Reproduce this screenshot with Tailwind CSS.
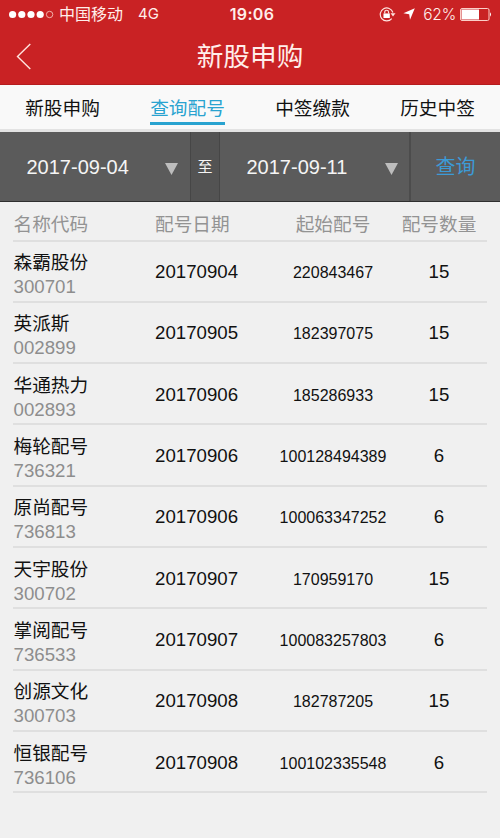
<!DOCTYPE html>
<html lang="zh-CN">
<head>
    <meta charset="UTF-8">
    <meta name="viewport" content="width=device-width, initial-scale=1.0">
    <title>新股申购</title>
    <script src="https://cdn.jsdelivr.net/npm/@tailwindcss/browser@4"></script>
</head>
<body class="bg-[#f0f0f0] min-h-screen overflow-hidden text-[#111] font-['Liberation_Sans','Noto_Sans_CJK_SC',sans-serif]">
    <header class="h-[85px] bg-[#c92224] text-[#ffeeea] border-b border-[#b51c1e]">
        <!-- status bar -->
        <div class="h-7 grid grid-cols-3 items-center pl-[9px] pr-2 font-['Inter','Noto_Sans_CJK_SC',sans-serif] text-[15px]">
            <div class="flex items-center">
                <svg class="w-[45px] h-[9px] shrink-0" viewBox="0 0 45 9" fill="#fff">
                    <circle cx="3.6" cy="4.5" r="3.6"/>
                    <circle cx="12.8" cy="4.5" r="3.6"/>
                    <circle cx="22" cy="4.5" r="3.6"/>
                    <circle cx="31.2" cy="4.5" r="3.6"/>
                    <circle cx="40.6" cy="4.5" r="3.2" fill="none" stroke="#fbcfc8" stroke-width="0.8"/>
                </svg>
                <span class="ml-[5px] text-base leading-7 whitespace-nowrap">中国移动</span>
                <span class="ml-[15px] mt-px text-[15px]">4G</span>
            </div>
            <div class="text-center font-semibold text-base tracking-[0.3px] pl-[3px]">19:06</div>
            <div class="flex items-center justify-end">
                <svg class="w-[17px] h-[15px] shrink-0" viewBox="0 0 16 14" fill="none" stroke="#ffe4df" stroke-width="1.1">
                    <path d="M13.1 5.1A6.1 6.1 0 1 0 12 10.8"/>
                    <path d="M10.9 5.9h4.6l-2.3 3z" fill="#ffe4df" stroke="none"/>
                    <rect x="4.2" y="6" width="6" height="4.3" fill="#fff" stroke="none"/>
                    <path d="M5.4 6V4.8a1.8 1.8 0 0 1 3.6 0V6"/>
                </svg>
                <svg class="w-3 h-3 ml-[7px] shrink-0" viewBox="0 0 12 12" fill="#fff">
                    <path d="M11.8.2 7 11.8 6.2 6.2.4 5.3z"/>
                </svg>
                <span class="ml-[8px] mr-1 mt-px font-light text-[15.5px] tracking-[-0.2px]">62%</span>
                <svg class="w-8 h-[13px] shrink-0" viewBox="0 0 32 13">
                    <rect x="0.5" y="0.5" width="28.5" height="12" rx="1.5" fill="none" stroke="#fbcfc8"/>
                    <rect x="1.5" y="1.5" width="17.5" height="10" fill="#fff"/>
                    <path d="M30 4.3q2 2.2 0 4.4z" fill="#fff"/>
                </svg>
            </div>
        </div>
        <div class="h-[57px] grid grid-cols-[100px_1fr_100px] items-center">
            <svg class="w-4 h-[27px] ml-4" viewBox="0 0 16 27" fill="none" stroke="#ffe4df" stroke-width="1.4">
                <path d="M14.3 1 1.5 13.5 14.3 26"/>
            </svg>
            <h1 class="text-center text-[26.67px] leading-[56px] font-normal">新股申购</h1>
        </div>
    </header>

    <nav class="h-[47px] bg-[#f9f9f9] border-b-[3px] border-[#e3e3e3] grid grid-cols-4 text-[18.67px] leading-[36px] text-center pt-1.5">
        <a>新股申购</a>
        <a class="justify-self-center w-[75px] h-[34px] border-b-3 border-[#29a3d0] text-[#29a3d0] whitespace-nowrap">查询配号</a>
        <a>中签缴款</a>
        <a>历史中签</a>
    </nav>

    <div class="h-[70px] bg-[#5b5b5b] border-b border-[#2f2f2f] flex items-stretch text-[#f5f5f5] text-xl leading-[70px]">
        <div class="w-[190px] flex items-center pl-[26.5px]">
            <span class="w-[138.5px]">2017-09-04</span>
            <svg class="w-[13px] h-3 mt-1" viewBox="0 0 13 12" fill="#bdbdbd"><path d="M0 0h13L6.5 12z"/></svg>
        </div>
        <div class="w-[30px] bg-[#535353] border-x border-[#464646] text-center text-[15px] leading-[70px]">至</div>
        <div class="w-[191px] flex items-center pl-[26.5px] border-r-2 border-[#4c4c4c]">
            <span class="w-[138.5px]">2017-09-11</span>
            <svg class="w-[13px] h-3 mt-1" viewBox="0 0 13 12" fill="#bdbdbd"><path d="M0 0h13L6.5 12z"/></svg>
        </div>
        <button class="flex-1 text-[#3d9ad6] leading-[70px]">查询</button>
    </div>

    <main class="px-[13px] text-[18.67px]">
        <div class="h-[39.5px] border-b-2 border-[#dfdfdf] grid grid-cols-[142px_115px_126px_86px] text-[#939393] leading-[46px]">
            <span class="pl-[0.5px]">名称代码</span>
            <span>配号日期</span>
            <span class="text-center">起始配号</span>
            <span class="text-center">配号数量</span>
        </div>
        <div id="list"></div>
    </main>

    <script>
    const rows = [
        ['森霸股份', '300701', '20170904', '220843467', '15'],
        ['英派斯', '002899', '20170905', '182397075', '15'],
        ['华通热力', '002893', '20170906', '185286933', '15'],
        ['梅轮配号', '736321', '20170906', '100128494389', '6'],
        ['原尚配号', '736813', '20170906', '100063347252', '6'],
        ['天宇股份', '300702', '20170907', '170959170', '15'],
        ['掌阅配号', '736533', '20170907', '100083257803', '6'],
        ['创源文化', '300703', '20170908', '182787205', '15'],
        ['恒银配号', '736106', '20170908', '100102335548', '6'],
    ];

    document.getElementById('list').innerHTML = rows.map(([name, code, date, start, count]) => `
        <div class="h-[61.33px] border-b-2 border-[#dfdfdf] grid grid-cols-[142px_115px_126px_86px] items-center">
            <div class="leading-6 pt-2 pl-[0.5px]">
                <div>${name}</div>
                <div class="text-[#8d8d8d]">${code}</div>
            </div>
            <div class="pt-0.5">${date}</div>
            <div class="text-center text-base pt-1">${start}</div>
            <div class="text-center pt-0.5">${count}</div>
        </div>`).join('');
    </script>
</body>
</html>
